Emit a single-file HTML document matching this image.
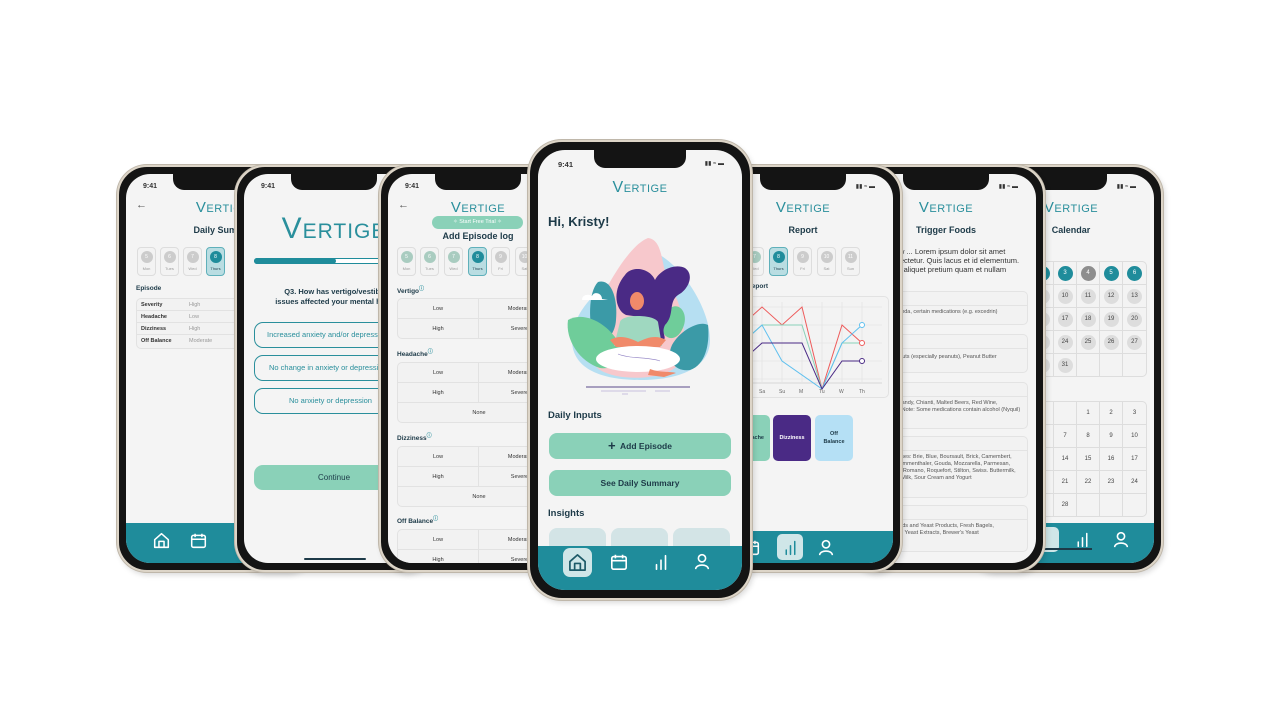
<!DOCTYPE html>
<html><head><meta charset="utf-8"><style>
*{margin:0;padding:0;box-sizing:border-box}
body{width:1280px;height:720px;background:#fff;position:relative;overflow:hidden;font-family:"Liberation Sans",sans-serif;color:#1d3a48}
.ph{position:absolute;border-radius:30px;background:#141414;border:2px solid #ddd5c8;box-shadow:0 0 0 1px #bfb7aa,2px 3px 6px rgba(0,0,0,.15)}
.sc{position:absolute;left:7px;top:7px;right:7px;bottom:7px;border-radius:24px;background:#f4f4f4;overflow:hidden}
.notch{position:absolute;top:0;left:50%;width:86px;margin-left:-43px;height:16px;background:#141414;border-radius:0 0 11px 11px;z-index:5}
.a{position:absolute}
.time{position:absolute;top:9px;left:17px;font-size:7px;font-weight:bold;color:#333}
.logo{position:absolute;left:0;right:0;text-align:center;color:#2a8f9c;font-variant:small-caps;font-size:15px;letter-spacing:.5px}
.ttl{position:absolute;left:0;right:0;text-align:center;font-size:9px;font-weight:bold;color:#1d3a48}
.nav{position:absolute;left:0;right:0;bottom:0;background:#1f8c9b}
.chip{position:absolute;width:19px;height:29px;border:1px solid #ddd;border-radius:4px;background:#f3f3f3;font-size:4px;color:#999;text-align:center}
.chip i{display:block;width:12px;height:12px;border-radius:50%;background:#ccc;margin:3px auto 3px;font-style:normal;color:#fff;font-size:5px;line-height:12px}
.chip.g i{background:#a9ccc0}
.chip.s{background:#b9dde2;border-color:#5fb0ba;color:#1d3a48}
.chip.s i{background:#1f8c9b}
.grid{position:absolute;border:1px solid #e2e2e2;border-radius:5px;background:#f2f2f2;font-size:5.5px;color:#333}
.grid div{position:absolute;text-align:center;border-bottom:1px solid #e2e2e2;height:20px;line-height:20px}
.lbl{position:absolute;font-size:6.5px;font-weight:bold;color:#1d3a48}
.card{position:absolute;border:1px solid #e3e3e3;border-radius:5px;background:#f2f2f2;font-size:5.5px;color:#555;line-height:7px}
.card>div+div{padding-left:18px!important;padding-right:4px!important}
.cal{position:absolute;border:1px solid #ddd;border-radius:5px;background:#f3f3f3}
.cal span{position:absolute;width:23px;height:23px;border-right:1px solid #ddd;border-bottom:1px solid #ddd;font-size:6px;text-align:center;line-height:23px;color:#444}
.cal span b{display:inline-block;width:15px;height:15px;border-radius:50%;background:#ddd;line-height:15px;font-weight:normal}
.cal span b.t{background:#1f8c9b;color:#fff}
.cal span b.k{background:#8e8e8e;color:#fff}
</style></head><body>

<svg width="0" height="0" style="position:absolute"><defs>
<g id="home"><path d="M2 9 L10 2 L18 9 V18 H2 Z M7 18 V11 H13 V18" fill="none" stroke="currentColor" stroke-width="1.8" stroke-linejoin="round"/></g>
<g id="calx"><rect x="2" y="4" width="16" height="14" rx="2" fill="none" stroke="currentColor" stroke-width="1.8"/><path d="M2 8.5H18M6 2V6M14 2V6" stroke="currentColor" stroke-width="1.8"/></g>
<g id="bars"><path d="M5 18V13M10 18V8M15 18V3" stroke="currentColor" stroke-width="1.8" stroke-linecap="round"/></g>
<g id="user"><circle cx="10" cy="7" r="4" fill="none" stroke="currentColor" stroke-width="1.8"/><path d="M3 19 C3 13 17 13 17 19" fill="none" stroke="currentColor" stroke-width="1.8"/></g>
</defs></svg>

<!-- P1 Daily summary -->
<div class="ph" style="left:117px;top:165px;width:198px;height:407px;z-index:1">
<div class="sc"><div class="notch"></div>
<div class="time">9:41</div>
<div class="a" style="left:10px;top:25px;font-size:11px;color:#555">&#8592;</div>
<div class="logo" style="top:25px;left:14px">Vertige</div>
<div class="ttl" style="top:51px;left:20px">Daily Summary</div>
<div class="chip" style="left:11px;top:73px"><i>5</i>Mon</div>
<div class="chip" style="left:34px;top:73px"><i>6</i>Tues</div>
<div class="chip" style="left:57px;top:73px"><i>7</i>Wed</div>
<div class="chip s" style="left:80px;top:73px"><i>8</i>Thurs</div>
<div class="lbl" style="left:10px;top:111px">Episode</div>
<div class="grid" style="left:10px;top:124px;width:150px;height:51px;font-size:5.5px">
<div style="left:0;top:0;width:100%;height:12px;line-height:12px;text-align:left;padding-left:4px"><b>Severity</b><span style="position:absolute;left:52px;color:#999">High</span></div>
<div style="left:0;top:12px;width:100%;height:12px;line-height:12px;text-align:left;padding-left:4px"><b>Headache</b><span style="position:absolute;left:52px;color:#999">Low</span></div>
<div style="left:0;top:24px;width:100%;height:12px;line-height:12px;text-align:left;padding-left:4px"><b>Dizziness</b><span style="position:absolute;left:52px;color:#999">High</span></div>
<div style="left:0;top:36px;width:100%;height:12px;line-height:12px;text-align:left;padding-left:4px;border:0"><b>Off Balance</b><span style="position:absolute;left:52px;color:#999">Moderate</span></div>
</div>
<div class="nav" style="height:40px">
<svg class="a" style="left:27px;top:9px;color:#fff" width="17" height="17" viewBox="0 0 20 20"><use href="#home"/></svg>
<svg class="a" style="left:64px;top:9px;color:#fff" width="17" height="17" viewBox="0 0 20 20"><use href="#calx"/></svg>
</div>
</div></div>

<!-- P2 Question -->
<div class="ph" style="left:235px;top:165px;width:198px;height:407px;z-index:2">
<div class="sc"><div class="notch"></div>
<div class="time">9:41</div>
<div class="logo" style="top:38px;font-size:30px;letter-spacing:1px">Vertige</div>
<div class="a" style="left:10px;top:84px;width:170px;height:6px;border-radius:3px;background:#fff;border:1px solid #1f8c9b"></div>
<div class="a" style="left:10px;top:84px;width:82px;height:6px;border-radius:3px;background:#1f8c9b"></div>
<div class="a" style="left:10px;top:113px;width:170px;text-align:center;font-size:7.5px;font-weight:bold;line-height:10px;color:#1d3a48;white-space:nowrap">Q3. How has vertigo/vestibular<br>issues affected your mental health?</div>
<div class="a" style="left:10px;top:148px;width:180px;height:26px;border:1px solid #2a8f9c;border-radius:9px;font-size:7.5px;line-height:24px;color:#2a8f9c;padding-left:12px;white-space:nowrap">Increased anxiety and/or depression</div>
<div class="a" style="left:10px;top:181px;width:180px;height:26px;border:1px solid #2a8f9c;border-radius:9px;font-size:7.5px;line-height:24px;color:#2a8f9c;padding-left:14px;white-space:nowrap">No change in anxiety or depression</div>
<div class="a" style="left:10px;top:214px;width:180px;height:26px;border:1px solid #2a8f9c;border-radius:9px;font-size:7.5px;line-height:24px;color:#2a8f9c;padding-left:34px;white-space:nowrap">No anxiety or depression</div>
<div class="a" style="left:10px;top:291px;width:180px;height:25px;border-radius:9px;background:#8ad1b8;font-size:8px;line-height:25px;color:#1d3a48;padding-left:64px">Continue</div>
<div class="a" style="left:60px;top:384px;width:62px;height:2px;background:#1d3a48;border-radius:1px"></div>
</div></div>

<!-- P3 Add Episode -->
<div class="ph" style="left:379px;top:165px;width:198px;height:407px;z-index:3">
<div class="sc"><div class="notch"></div>
<div class="time">9:41</div>
<div class="a" style="left:10px;top:25px;font-size:11px;color:#555">&#8592;</div>
<div class="logo" style="top:25px">Vertige</div>
<div class="a" style="left:44px;top:42px;width:91px;height:13px;border-radius:7px;background:#8ad1b8;color:#fff;font-size:5.5px;line-height:13px;text-align:center">&#10023; Start Free Trial &#10023;</div>
<div class="ttl" style="top:57px">Add Episode log</div>
<div class="chip g" style="left:9px;top:73px"><i>5</i>Mon</div>
<div class="chip g" style="left:32px;top:73px"><i>6</i>Tues</div>
<div class="chip g" style="left:56px;top:73px"><i>7</i>Wed</div>
<div class="chip s" style="left:80px;top:73px"><i>8</i>Thurs</div>
<div class="chip" style="left:103px;top:73px"><i>9</i>Fri</div>
<div class="chip" style="left:127px;top:73px"><i>10</i>Sat</div>
<div class="lbl" style="left:9px;top:111px">Vertigo<sup style="color:#2a8f9c;font-size:5px">&#9432;</sup></div>
<div class="grid" style="left:9px;top:124px;width:170px;height:41px"><div style="left:0;top:0;width:81px;border-right:1px solid #e2e2e2">Low</div><div style="left:81px;top:0;width:81px">Moderate</div><div style="left:0;top:20px;width:81px;border-right:1px solid #e2e2e2;border-bottom:0">High</div><div style="left:81px;top:20px;width:81px;border-bottom:0">Severe</div></div>
<div class="lbl" style="left:9px;top:174px">Headache<sup style="color:#2a8f9c;font-size:5px">&#9432;</sup></div>
<div class="grid" style="left:9px;top:188px;width:170px;height:61px"><div style="left:0;top:0;width:81px;border-right:1px solid #e2e2e2">Low</div><div style="left:81px;top:0;width:81px">Moderate</div><div style="left:0;top:20px;width:81px;border-right:1px solid #e2e2e2">High</div><div style="left:81px;top:20px;width:81px">Severe</div><div style="left:0;top:40px;width:162px;border:0">None</div></div>
<div class="lbl" style="left:9px;top:258px">Dizziness<sup style="color:#2a8f9c;font-size:5px">&#9432;</sup></div>
<div class="grid" style="left:9px;top:272px;width:170px;height:61px"><div style="left:0;top:0;width:81px;border-right:1px solid #e2e2e2">Low</div><div style="left:81px;top:0;width:81px">Moderate</div><div style="left:0;top:20px;width:81px;border-right:1px solid #e2e2e2">High</div><div style="left:81px;top:20px;width:81px">Severe</div><div style="left:0;top:40px;width:162px;border:0">None</div></div>
<div class="lbl" style="left:9px;top:341px">Off Balance<sup style="color:#2a8f9c;font-size:5px">&#9432;</sup></div>
<div class="grid" style="left:9px;top:355px;width:170px;height:61px"><div style="left:0;top:0;width:81px;border-right:1px solid #e2e2e2">Low</div><div style="left:81px;top:0;width:81px">Moderate</div><div style="left:0;top:20px;width:81px;border-right:1px solid #e2e2e2">High</div><div style="left:81px;top:20px;width:81px">Severe</div></div>
</div></div>

<!-- P7 Calendar -->
<div class="ph" style="left:965px;top:165px;width:198px;height:407px;z-index:1">
<div class="sc"><div class="notch"></div>
<div class="a" style="right:18px;top:9px;font-size:6px;color:#333">&#9646;&#9646; &#8776; &#9644;</div>
<div class="logo" style="top:25px;left:14px">Vertige</div>
<div class="ttl" style="top:51px;left:14px">Calendar</div>
<div class="cal" style="left:56px;top:87px;width:117px;height:116px">
<span style="left:0;top:0"><b class="t">2</b></span><span style="left:23px;top:0"><b class="t">3</b></span><span style="left:46px;top:0"><b class="k">4</b></span><span style="left:69px;top:0"><b class="t">5</b></span><span style="left:92px;top:0;border-right:0"><b class="t">6</b></span>
<span style="left:0;top:23px"><b>9</b></span><span style="left:23px;top:23px"><b>10</b></span><span style="left:46px;top:23px"><b>11</b></span><span style="left:69px;top:23px"><b>12</b></span><span style="left:92px;top:23px;border-right:0"><b>13</b></span>
<span style="left:0;top:46px"><b>16</b></span><span style="left:23px;top:46px"><b>17</b></span><span style="left:46px;top:46px"><b>18</b></span><span style="left:69px;top:46px"><b>19</b></span><span style="left:92px;top:46px;border-right:0"><b>20</b></span>
<span style="left:0;top:69px"><b>23</b></span><span style="left:23px;top:69px"><b>24</b></span><span style="left:46px;top:69px"><b>25</b></span><span style="left:69px;top:69px"><b>26</b></span><span style="left:92px;top:69px;border-right:0"><b>27</b></span>
<span style="left:0;top:92px;border-bottom:0"><b>30</b></span><span style="left:23px;top:92px;border-bottom:0"><b>31</b></span><span style="left:46px;top:92px;border-bottom:0"></span><span style="left:69px;top:92px;border-bottom:0"></span>
</div>
<div class="cal" style="left:56px;top:227px;width:117px;height:116px">
<span style="left:0;top:0"></span><span style="left:23px;top:0"></span><span style="left:46px;top:0">1</span><span style="left:69px;top:0">2</span><span style="left:92px;top:0;border-right:0">3</span>
<span style="left:0;top:23px">6</span><span style="left:23px;top:23px">7</span><span style="left:46px;top:23px">8</span><span style="left:69px;top:23px">9</span><span style="left:92px;top:23px;border-right:0">10</span>
<span style="left:0;top:46px">13</span><span style="left:23px;top:46px">14</span><span style="left:46px;top:46px">15</span><span style="left:69px;top:46px">16</span><span style="left:92px;top:46px;border-right:0">17</span>
<span style="left:0;top:69px">20</span><span style="left:23px;top:69px">21</span><span style="left:46px;top:69px">22</span><span style="left:69px;top:69px">23</span><span style="left:92px;top:69px;border-right:0">24</span>
<span style="left:0;top:92px;border-bottom:0">27</span><span style="left:23px;top:92px;border-bottom:0">28</span><span style="left:46px;top:92px;border-bottom:0"></span><span style="left:69px;top:92px;border-bottom:0"></span>
</div>
<div class="nav" style="height:40px">
<div class="a" style="left:60px;top:4px;width:25px;height:25px;border-radius:5px;background:#cfe6e8"></div>
<svg class="a" style="left:100px;top:8px;color:#fff" width="17" height="17" viewBox="0 0 20 20"><use href="#bars"/></svg>
<svg class="a" style="left:138px;top:7px;color:#fff" width="18" height="18" viewBox="0 0 20 20"><use href="#user"/></svg>
<div class="a" style="left:50px;top:25px;width:68px;height:2px;background:#1d3a48"></div>
</div>
</div></div>

<!-- P6 Trigger Foods -->
<div class="ph" style="left:847px;top:165px;width:198px;height:407px;z-index:2">
<div class="sc"><div class="notch"></div>
<div class="a" style="right:18px;top:9px;font-size:6px;color:#333">&#9646;&#9646; &#8776; &#9644;</div>
<div class="logo" style="top:25px">Vertige</div>
<div class="ttl" style="top:51px">Trigger Foods</div>
<div class="a" style="left:28px;top:73px;width:160px;font-size:7.5px;line-height:9px;color:#333;white-space:nowrap">Below ... Lorem ipsum dolor sit amet<br>consectetur. Quis lacus et id elementum.<br>Nunc aliquet pretium quam et nullam</div>
<div class="card" style="left:0;top:117px;width:172px;height:34px"><div style="border-bottom:1px solid #e3e3e3;height:14px"></div><div style="padding:3px 4px">Caffeine, soda, certain medications (e.g. excedrin)</div></div>
<div class="card" style="left:0;top:160px;width:172px;height:39px"><div style="border-bottom:1px solid #e3e3e3;height:14px"></div><div style="padding:5px 4px">Peanuts, Nuts (especially peanuts), Peanut Butter</div></div>
<div class="card" style="left:0;top:208px;width:172px;height:47px"><div style="border-bottom:1px solid #e3e3e3;height:14px"></div><div style="padding:3px 4px">Alcohol, Brandy, Chianti, Malted Beers, Red Wine, Vermouth. Note: Some medications contain alcohol (Nyquil)</div></div>
<div class="card" style="left:0;top:262px;width:172px;height:62px"><div style="border-bottom:1px solid #e3e3e3;height:14px"></div><div style="padding:3px 4px">Aged cheeses: Brie, Blue, Boursault, Brick, Camembert, Cheddar, Emmenthaler, Gouda, Mozzarella, Parmesan, Provolone, Romano, Roquefort, Stilton, Swiss. Buttermilk, Chocolate Milk, Sour Cream and Yogurt</div></div>
<div class="card" style="left:0;top:331px;width:172px;height:47px"><div style="border-bottom:1px solid #e3e3e3;height:14px"></div><div style="padding:3px 4px">Fresh Breads and Yeast Products, Fresh Bagels, Doughnuts, Yeast Extracts, Brewer's Yeast</div></div>
</div></div>

<!-- P5 Report -->
<div class="ph" style="left:704px;top:165px;width:198px;height:407px;z-index:3">
<div class="sc"><div class="notch"></div>
<div class="a" style="right:18px;top:9px;font-size:6px;color:#333">&#9646;&#9646; &#8776; &#9644;</div>
<div class="logo" style="top:25px">Vertige</div>
<div class="ttl" style="top:51px">Report</div>
<div class="chip" style="left:8px;top:73px"><i>6</i>Tues</div>
<div class="chip g" style="left:32px;top:73px"><i>7</i>Wed</div>
<div class="chip s" style="left:56px;top:73px"><i>8</i>Thurs</div>
<div class="chip" style="left:80px;top:73px"><i>9</i>Fri</div>
<div class="chip" style="left:104px;top:73px"><i>10</i>Sat</div>
<div class="chip" style="left:128px;top:73px"><i>11</i>Sun</div>
<div class="lbl" style="left:10px;top:109px">Weekly Report</div>
<div class="a" style="left:8px;top:122px;width:168px;height:102px;border:1px solid #e2e2e2;border-radius:5px;background:#f3f3f3">
<svg width="166" height="100" viewBox="0 0 166 100" style="position:absolute;left:0;top:0">
<g stroke="#e0e0e0" stroke-width=".6"><path d="M10 10H160M10 28H160M10 46H160M10 64H160M10 82H160M20 5V85M40 5V85M60 5V85M80 5V85M100 5V85M120 5V85M140 5V85"/></g>
<path d="M10 86H160" stroke="#bbb" stroke-width=".6"/>
<polyline points="0,40 20,28 40,10 60,28 80,10 100,92 120,28 140,46" fill="none" stroke="#ee5a5a" stroke-width="1"/>
<polyline points="0,55 20,46 40,28 60,28 80,28 100,92 120,46 140,46" fill="none" stroke="#8ad1b8" stroke-width="1"/>
<polyline points="0,60 20,46 40,28 60,64 100,92 120,46 140,28" fill="none" stroke="#5fc0ef" stroke-width="1"/>
<polyline points="0,64 20,64 40,46 60,46 80,46 100,92 120,64 140,64" fill="none" stroke="#4a2a85" stroke-width="1"/>
<circle cx="140" cy="28" r="2.5" fill="#fff" stroke="#5fc0ef"/><circle cx="140" cy="46" r="2.5" fill="#fff" stroke="#ee5a5a"/><circle cx="140" cy="64" r="2.5" fill="#fff" stroke="#4a2a85"/>
<g font-size="5" fill="#666" font-family="Liberation Sans"><text x="18" y="96">F</text><text x="37" y="96">Sa</text><text x="57" y="96">Su</text><text x="77" y="96">M</text><text x="97" y="96">Tu</text><text x="117" y="96">W</text><text x="137" y="96">Th</text></g>
</svg></div>
<div class="a" style="left:0;top:241px;width:13px;height:46px;border-radius:5px;background:#ee5a5a"></div>
<div class="a" style="left:19px;top:241px;width:38px;height:46px;border-radius:5px;background:#8ad1b8;font-size:5.5px;font-weight:bold;text-align:center;line-height:46px">Headache</div>
<div class="a" style="left:60px;top:241px;width:38px;height:46px;border-radius:5px;background:#4a2a85;color:#fff;font-size:5.5px;font-weight:bold;text-align:center;line-height:46px">Dizziness</div>
<div class="a" style="left:102px;top:241px;width:38px;height:46px;border-radius:5px;background:#b5e0f5;font-size:5.5px;font-weight:bold;text-align:center;padding-top:15px;line-height:8px">Off<br>Balance</div>
<div class="nav" style="height:32px">
<svg class="a" style="left:30px;top:8px;color:#fff" width="17" height="17" viewBox="0 0 20 20"><use href="#calx"/></svg>
<div class="a" style="left:64px;top:3px;width:26px;height:26px;border-radius:5px;background:#cfe6e8"></div>
<svg class="a" style="left:69px;top:8px;color:#1f8c9b" width="17" height="17" viewBox="0 0 20 20"><use href="#bars"/></svg>
<svg class="a" style="left:104px;top:7px;color:#fff" width="18" height="18" viewBox="0 0 20 20"><use href="#user"/></svg>
</div>
</div></div>

<!-- Center phone -->
<div class="ph" style="left:528px;top:140px;width:224px;height:460px;z-index:10;border-radius:34px;border-width:2px">
<div class="sc" style="left:8px;top:8px;right:8px;bottom:8px;border-radius:27px"><div class="notch" style="width:92px;margin-left:-46px;height:18px"></div>
<div class="time" style="top:10px;left:20px;font-size:7.5px">9:41</div>
<div class="a" style="right:18px;top:10px;font-size:6px;color:#333">&#9646;&#9646; &#8776; &#9644;</div>
<div class="logo" style="top:29px;font-size:16px">Vertige</div>
<div class="a" style="left:10px;top:64px;font-size:13px;font-weight:bold;color:#1d3a48">Hi, Kristy!</div>
<svg class="a" style="left:22px;top:80px" width="160" height="170" viewBox="0 0 160 170">
<path d="M100 25 C125 40 150 80 150 110 C150 135 125 150 80 150 C40 150 12 138 12 110 C12 85 35 60 55 50 C75 40 90 30 100 25Z" fill="#b6dff2"/>
<path d="M88 8 C105 10 100 40 112 60 C125 80 128 115 118 135 C105 150 60 152 40 140 C25 130 25 100 35 80 C50 50 70 15 88 8Z" fill="#f7c8cc"/>
<path d="M38 52 C52 48 58 70 56 90 C55 105 45 115 35 110 C28 95 28 62 38 52 Z" fill="#3b9aa7"/>
<path d="M8 90 C25 80 50 95 60 115 C65 130 55 140 40 138 C20 132 5 110 8 90 Z" fill="#6fcd9a"/>
<path d="M148 95 C140 90 120 100 112 115 C105 130 115 142 130 140 C145 135 150 115 148 95 Z" fill="#3b9aa7"/>
<path d="M108 80 C118 70 128 82 124 95 C120 108 110 112 104 104 C100 96 102 86 108 80 Z" fill="#6fcd9a"/>
<path d="M65 45 C72 35 90 38 95 50 C100 40 115 33 125 38 C135 45 128 60 118 65 C108 72 115 85 105 95 C100 105 110 108 100 112 C90 110 95 95 88 88 L66 85 C55 80 52 60 65 45Z" fill="#4a2a85"/>
<ellipse cx="77" cy="71" rx="7" ry="9" fill="#f08a6a"/>
<path d="M60 92 C62 84 94 84 98 92 L102 116 L54 116 Z" fill="#9fd8c0"/>
<path d="M50 110 C60 104 70 108 78 112 C86 108 96 104 106 110 L100 117 L56 117 Z" fill="#f08a6a"/>
<ellipse cx="78" cy="129" rx="42" ry="13" fill="#fff"/>
<path d="M58 124 C70 129 90 127 100 131" fill="none" stroke="#8a7ac0" stroke-width=".6"/>
<path d="M90 139 C100 143 110 141 116 143 L104 147 L88 145 Z" fill="#f08a6a"/>
<path d="M22 70 C22 64 30 64 32 66 C34 61 42 63 42 69 L48 70 L20 70 Z" fill="#fff"/>
<path d="M26 157H130" stroke="#5a4a8a" stroke-width="1"/>
<path d="M41 161H86M95 161H110M62 164H68" stroke="#9a8ac8" stroke-width=".6"/>
</svg>
<div class="a" style="left:10px;top:260px;font-size:9.5px;font-weight:bold;color:#1d3a48">Daily Inputs</div>
<div class="a" style="left:11px;top:283px;width:182px;height:26px;border-radius:8px;background:#8ad1b8;text-align:center;font-size:8.5px;line-height:26px;font-weight:bold;color:#1d3a48"><span style="font-size:13px;vertical-align:-1px">+</span>&nbsp; Add Episode</div>
<div class="a" style="left:11px;top:320px;width:182px;height:26px;border-radius:8px;background:#8ad1b8;text-align:center;font-size:8.5px;line-height:26px;font-weight:bold;color:#1d3a48">See Daily Summary</div>
<div class="a" style="left:10px;top:358px;font-size:9.5px;font-weight:bold;color:#1d3a48">Insights</div>
<div class="a" style="left:11px;top:378px;width:57px;height:40px;border-radius:8px;background:#d3e4e6;font-size:7px;text-align:center;padding-top:20px;color:#1d3a48">Vestibular</div>
<div class="a" style="left:73px;top:378px;width:57px;height:40px;border-radius:8px;background:#d3e4e6;font-size:8px;text-align:center;padding-top:22px;color:#1d3a48">Trigger</div>
<div class="a" style="left:135px;top:378px;width:57px;height:40px;border-radius:8px;background:#d3e4e6"></div>
<div class="nav" style="height:44px">
<div class="a" style="left:25px;top:2px;width:29px;height:29px;border-radius:7px;background:#cfe6e8"></div>
<svg class="a" style="left:30px;top:7px;color:#1d5a68" width="19" height="19" viewBox="0 0 20 20"><use href="#home"/></svg>
<svg class="a" style="left:72px;top:7px;color:#fff" width="18" height="18" viewBox="0 0 20 20"><use href="#calx"/></svg>
<svg class="a" style="left:114px;top:7px;color:#fff" width="18" height="18" viewBox="0 0 20 20"><use href="#bars"/></svg>
<svg class="a" style="left:155px;top:6px;color:#fff" width="18" height="18" viewBox="0 0 20 20"><use href="#user"/></svg>
</div>
</div></div>

</body></html>
